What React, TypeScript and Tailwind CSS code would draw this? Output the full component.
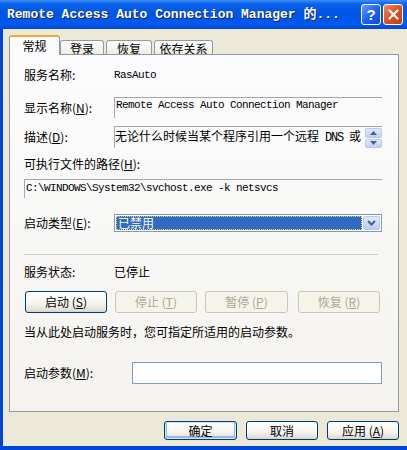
import type { ReactNode } from "react";

const cjk = "font-['Noto_Sans_CJK_SC','Liberation_Sans',sans-serif]";
const mono = "font-['Liberation_Mono','Noto_Sans_CJK_SC',monospace]";
// SimSun-like latin: 6px per glyph, a little taller than 10px mono
const simLatin = `text-[11px] tracking-[-0.6px] ${mono}`;

function XpButton({
  children,
  width,
  disabled,
  isDefault,
}: {
  children: ReactNode;
  width: string;
  disabled?: boolean;
  isDefault?: boolean;
}) {
  return (
    <div
      className={`${width} flex h-full items-center justify-center rounded-[3px] border text-[12px] ${cjk} ${
        disabled
          ? "border-[#c9c7ba] bg-[#f5f4ea] text-[#aca899]"
          : "border-[#003c74] bg-[linear-gradient(to_bottom,#ffffff_0%,#f4f3ee_60%,#e3e1d6_90%,#d6d0c5_100%)] text-black"
      } ${isDefault ? "shadow-[inset_0_0_0_1px_#cee7ff,inset_0_-1px_0_2px_#98b8ea]" : ""}`}
    >
      {children}
    </div>
  );
}

function Label({ children, width = "w-[90px]" }: { children: ReactNode; width?: string }) {
  return <div className={`${width} shrink-0 text-[12px] leading-none ${cjk}`}>{children}</div>;
}

function Tab({ label, width, active }: { label: string; width: string; active?: boolean }) {
  if (active) {
    return (
      <div
        className={`${width} relative z-10 flex h-[20px] items-center justify-center rounded-t-[3px] border-x border-t-2 border-x-[#919b9c] border-t-[#f5a82f] bg-[#fcfcfe] pb-[1px] text-[12px] ${cjk}`}
      >
        {label}
      </div>
    );
  }
  return (
    <div
      className={`${width} flex h-[15px] items-center justify-center rounded-t-[3px] border-x border-t border-[#919b9c] bg-[linear-gradient(to_bottom,#ffffff,#ecebe5)] pt-[1px] text-[12px] ${cjk}`}
    >
      {label}
    </div>
  );
}

function Arrow({ up }: { up?: boolean }) {
  return (
    <div className="flex h-[10px] w-[17px] items-center justify-center rounded-[2px] border border-[#b9c9ef] bg-[linear-gradient(to_bottom,#e1eafe,#bccdf5)]">
      <svg width="7" height="4" viewBox="0 0 7 4">
        <path d={up ? "M0 4 L3.5 0 L7 4 Z" : "M0 0 L3.5 4 L7 0 Z"} fill="#4d6185" />
      </svg>
    </div>
  );
}

export default function App() {
  return (
    <div className="flex h-[450px] w-[407px] flex-col overflow-hidden bg-white">
      {/* caption */}
      <div className="flex h-[29px] shrink-0 items-center bg-[linear-gradient(to_bottom,#3d8ff7_0%,#0a62ea_14%,#0055e5_45%,#0058ee_85%,#0046d4_100%)] pl-[7px] pr-[4px]">
        <div
          className={`flex-1 text-[13px] font-bold leading-none text-white [text-shadow:1px_1px_0_#0a1f6b] ${mono}`}
        >
          Remote Access Auto Connection Manager 的...
        </div>
        <div className="flex items-center gap-[2px]">
          <div className="flex h-[21px] w-[20px] items-center justify-center rounded-[3px] border border-white bg-[linear-gradient(135deg,#5d9cff,#1a5ef0_55%,#0f4ad8)] text-[15px] font-bold leading-none text-white font-['Liberation_Sans',sans-serif]">
            ?
          </div>
          <div className="flex h-[21px] w-[20px] items-center justify-center rounded-[3px] border border-white bg-[linear-gradient(135deg,#f08a6b,#e0501f_50%,#c33c10)]">
            <svg width="11" height="11" viewBox="0 0 11 11">
              <path d="M1.5 1.5 L9.5 9.5 M9.5 1.5 L1.5 9.5" stroke="white" strokeWidth="2.2" strokeLinecap="round" />
            </svg>
          </div>
        </div>
      </div>

      {/* body */}
      <div className="flex flex-1 flex-col border-b-4 border-l-[3px] border-[#0047d7] bg-[#ece9d8] pt-[6px]">
        <div className="flex items-end pl-[6px]">
          <Tab label="常规" width="w-[51px]" active />
          <Tab label="登录" width="w-[44px]" />
          <div className="w-[2px]" />
          <Tab label="恢复" width="w-[46px]" />
          <div className="w-[2px]" />
          <Tab label="依存关系" width="w-[59px]" />
        </div>

        <div className="ml-[6px] -mt-px flex h-[358px] w-[390px] flex-col border border-[#919b9c] bg-[linear-gradient(to_bottom,#fcfcfe,#f4f3ee)] pl-[14px] pr-[16px]">
          <div className="mt-[10px] flex h-[20px] items-center">
            <Label>服务名称:</Label>
            <div className={simLatin}>RasAuto</div>
          </div>

          <div className="mt-[12px] flex h-[21px] items-center">
            <Label>
              显示名称(<span className="underline">N</span>):
            </Label>
            <div className="flex h-full flex-1 items-start border-l border-t border-[#a7a6aa] pl-[1px] pt-[1px]">
              <span className={`leading-[13px] ${simLatin}`}>Remote Access Auto Connection Manager</span>
            </div>
          </div>

          <div className="mt-[8px] flex h-[22px] items-center">
            <Label>
              描述(<span className="underline">D</span>):
            </Label>
            <div className="flex h-full flex-1 border-l border-t border-[#a7a6aa]">
              <div className={`flex-1 pt-[1px] text-[12px] leading-[15px] ${cjk}`}>
                无论什么时候当某个程序引用一个远程
                <span className={`text-[12px] tracking-[-1.2px] ${mono}`}> DNS </span>或
              </div>
              <div className="flex flex-col gap-px pt-px">
                <Arrow up />
                <Arrow />
              </div>
            </div>
          </div>

          <div className="mt-[8px] flex h-[16px] items-center">
            <Label width="w-auto">
              可执行文件的路径(<span className="underline">H</span>):
            </Label>
          </div>

          <div className="mt-[7px] flex h-[19px] items-start border-l border-t border-[#a7a6aa] pl-[1px] pt-[1px]">
            <span className={`leading-[14px] ${simLatin}`}>{"C:\\WINDOWS\\System32\\svchost.exe -k netsvcs"}</span>
          </div>

          <div className="mt-[16px] flex h-[18px] items-center">
            <Label>
              启动类型(<span className="underline">E</span>):
            </Label>
            <div className="flex h-full flex-1 items-stretch border border-[#7f9db9] bg-white p-[1px]">
              <div className="flex flex-1 items-center border border-dotted border-[#f0d060] bg-[#316ac5] pl-[1px]">
                <span className={`text-[12px] leading-none text-white ${cjk}`}>已禁用</span>
              </div>
              <div className="ml-[1px] flex w-[17px] items-center justify-center rounded-[2px] border border-[#b9c9ef] bg-[linear-gradient(to_bottom,#e1eafe,#bccdf5)]">
                <svg width="9" height="6" viewBox="0 0 9 6">
                  <path d="M1 1 L4.5 4.5 L8 1" stroke="#4d6185" strokeWidth="2" fill="none" />
                </svg>
              </div>
            </div>
          </div>

          <div className="mt-[22px] mr-[4px] h-px bg-[#d0d0bf]" />

          <div className="mt-[9px] flex h-[16px] items-center">
            <Label>服务状态:</Label>
            <div className={`text-[12px] leading-none ${cjk}`}>已停止</div>
          </div>

          <div className="mt-[11px] flex h-[22px] items-center pl-px">
            <XpButton width="w-[82px]">
              启动 (<span className="underline">S</span>)
            </XpButton>
            <div className="w-[8px]" />
            <XpButton width="w-[82px]" disabled>
              停止 (<span className="underline">T</span>)
            </XpButton>
            <div className="w-[8px]" />
            <XpButton width="w-[83px]" disabled>
              暂停 (<span className="underline">P</span>)
            </XpButton>
            <div className="w-[10px]" />
            <XpButton width="w-[82px]" disabled>
              恢复 (<span className="underline">R</span>)
            </XpButton>
          </div>

          <div className={`mt-[11px] flex h-[16px] items-center text-[12px] leading-none ${cjk}`}>
            当从此处启动服务时，您可指定所适用的启动参数。
          </div>

          <div className="mt-[22px] flex h-[22px] items-center">
            <Label width="w-[108px]">
              启动参数(<span className="underline">M</span>):
            </Label>
            <div className="h-full flex-1 border border-[#7f9db9] bg-white" />
          </div>
        </div>

        <div className="mt-[9px] flex h-[19px] justify-end gap-[9px] pr-[8px]">
          <XpButton width="w-[73px]" isDefault>
            确定
          </XpButton>
          <XpButton width="w-[72px]">取消</XpButton>
          <XpButton width="w-[72px]">
            应用 (<span className="underline">A</span>)
          </XpButton>
        </div>
      </div>
    </div>
  );
}
